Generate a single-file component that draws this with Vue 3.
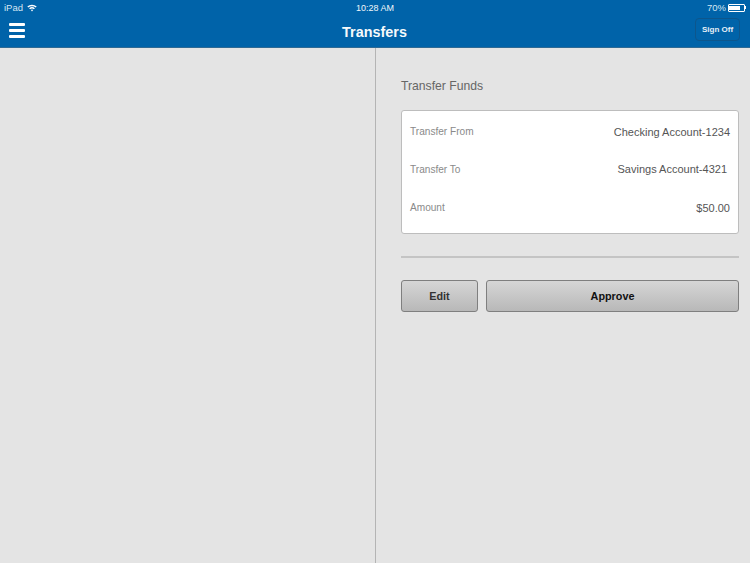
<template>
  <div class="page">
    <header class="header">
      <div class="status-bar">
        <div class="status-left">
          <span>iPad</span>
          <svg class="wifi" width="10" height="8" viewBox="0 0 10 8">
            <path d="M0.3 2.6 A6.8 6.8 0 0 1 9.7 2.6 L8.7 3.6 A5.4 5.4 0 0 0 1.3 3.6 Z" fill="#fff" />
            <path d="M2.1 4.3 A4.2 4.2 0 0 1 7.9 4.3 L6.9 5.3 A2.8 2.8 0 0 0 3.1 5.3 Z" fill="#fff" />
            <path d="M3.9 6 A1.7 1.7 0 0 1 6.1 6 L5 7.4 Z" fill="#fff" />
          </svg>
        </div>
        <span class="clock">10:28 AM</span>
        <div class="status-right">
          <span>70%</span>
          <div class="battery"><div class="battery-fill" :style="{ width: batteryLevel + '%' }"></div></div>
          <div class="battery-tip"></div>
        </div>
      </div>
      <div class="nav-bar">
        <button class="menu-button" aria-label="Menu">
          <span></span>
          <span></span>
          <span></span>
        </button>
        <h1 class="nav-title">Transfers</h1>
        <button class="sign-off">Sign Off</button>
      </div>
    </header>

    <main class="content">
      <div class="left-pane"></div>
      <section class="right-pane">
        <h2 class="section-title">Transfer Funds</h2>
        <div class="card">
          <div v-for="row in rows" :key="row.label" class="row">
            <span class="row-label">{{ row.label }}</span>
            <span class="row-value" :class="{ inset: row.inset }">{{ row.value }}</span>
          </div>
        </div>
        <hr class="divider" />
        <div class="actions">
          <button class="action edit">Edit</button>
          <button class="action approve">Approve</button>
        </div>
      </section>
    </main>
  </div>
</template>

<script setup>
const batteryLevel = 70

const rows = [
  { label: 'Transfer From', value: 'Checking Account-1234' },
  { label: 'Transfer To', value: 'Savings Account-4321', inset: true },
  { label: 'Amount', value: '$50.00' }
]
</script>

<style>
html,
body {
  margin: 0;
  background: #e4e4e4;
}
</style>

<style scoped>
.page {
  display: flex;
  flex-direction: column;
  width: 750px;
  height: 563px;
  overflow: hidden;
  font-family: "Liberation Sans", Arial, sans-serif;
  background: #e4e4e4;
}

.header {
  height: 48px;
  box-sizing: border-box;
  flex: none;
  background: #0063a9;
  border-bottom: 1px solid #2f6a94;
  color: #fff;
}

.status-bar {
  display: grid;
  grid-template-columns: 1fr auto 1fr;
  align-items: center;
  height: 15px;
  padding: 0 4px;
  font-size: 9.5px;
  color: #d4e6f3;
}

.status-left {
  display: flex;
  align-items: center;
  gap: 4px;
}

.status-right {
  display: flex;
  align-items: center;
  justify-content: flex-end;
  gap: 2px;
}

.clock {
  font-size: 9px;
  color: #f1f6fa;
}

.battery {
  width: 15px;
  height: 4px;
  padding: 1px 0;
  border: 1px solid #fff;
  border-radius: 1px;
}

.battery-fill {
  height: 100%;
  background: #fff;
}

.battery-tip {
  width: 1px;
  height: 3px;
  margin-left: -2px;
  background: #fff;
}

.nav-bar {
  display: grid;
  grid-template-columns: 1fr auto 1fr;
  align-items: center;
  height: 32px;
  padding: 0 10px 0 9px;
}

.menu-button {
  display: flex;
  flex-direction: column;
  gap: 3px;
  width: 16px;
  padding: 0;
  margin-bottom: 2px;
  background: none;
  border: none;
}

.menu-button span {
  display: block;
  height: 3px;
  background: #fff;
  border-radius: 1px;
}

.nav-title {
  margin: 2px 0 0;
  font-size: 14.4px;
  font-weight: 700;
  color: #f6f9fb;
}

.sign-off {
  justify-self: end;
  width: 45px;
  height: 23px;
  padding: 0;
  margin-top: -3px;
  font-family: inherit;
  font-size: 8px;
  font-weight: 700;
  color: #e6f0f7;
  background: #0063a9;
  border: 1px solid #0d568c;
  border-radius: 4px;
}

.content {
  display: flex;
  flex: 1;
  min-height: 0;
}

.left-pane {
  width: 375px;
  flex: none;
}

.right-pane {
  flex: 1;
  box-sizing: border-box;
  padding: 30px 11px 0 25px;
  border-left: 1px solid #b4b4b4;
}

.section-title {
  margin: 0 0 16px;
  height: 16px;
  font-size: 12.2px;
  line-height: 16px;
  font-weight: 400;
  color: #666;
}

.card {
  display: flex;
  flex-direction: column;
  box-sizing: border-box;
  height: 124px;
  padding: 1px 8px 7px 8px;
  background: #fff;
  border: 1px solid #bdbdbd;
  border-radius: 3px;
}

.row {
  display: flex;
  flex: 1;
  align-items: center;
  justify-content: space-between;
}

.row-label {
  font-size: 10.1px;
  color: #8a8a8a;
}

.row-value {
  padding-top: 2px;
  font-size: 11px;
  color: #555;
}

.row-value.inset {
  padding-top: 0;
  margin-right: 3px;
}

.divider {
  height: 2px;
  margin: 22px 0;
  background: #c4c4c4;
  border: none;
}

.actions {
  display: flex;
  gap: 8px;
}

.action {
  height: 32px;
  padding: 0;
  font-family: inherit;
  font-size: 10.8px;
  font-weight: 700;
  background: linear-gradient(#d6d6d6, #b8b8b8);
  border: 1px solid #7f7f7f;
  border-radius: 3px;
}

.edit {
  width: 77px;
  color: #333;
}

.approve {
  flex: 1;
  color: #111;
}
</style>
